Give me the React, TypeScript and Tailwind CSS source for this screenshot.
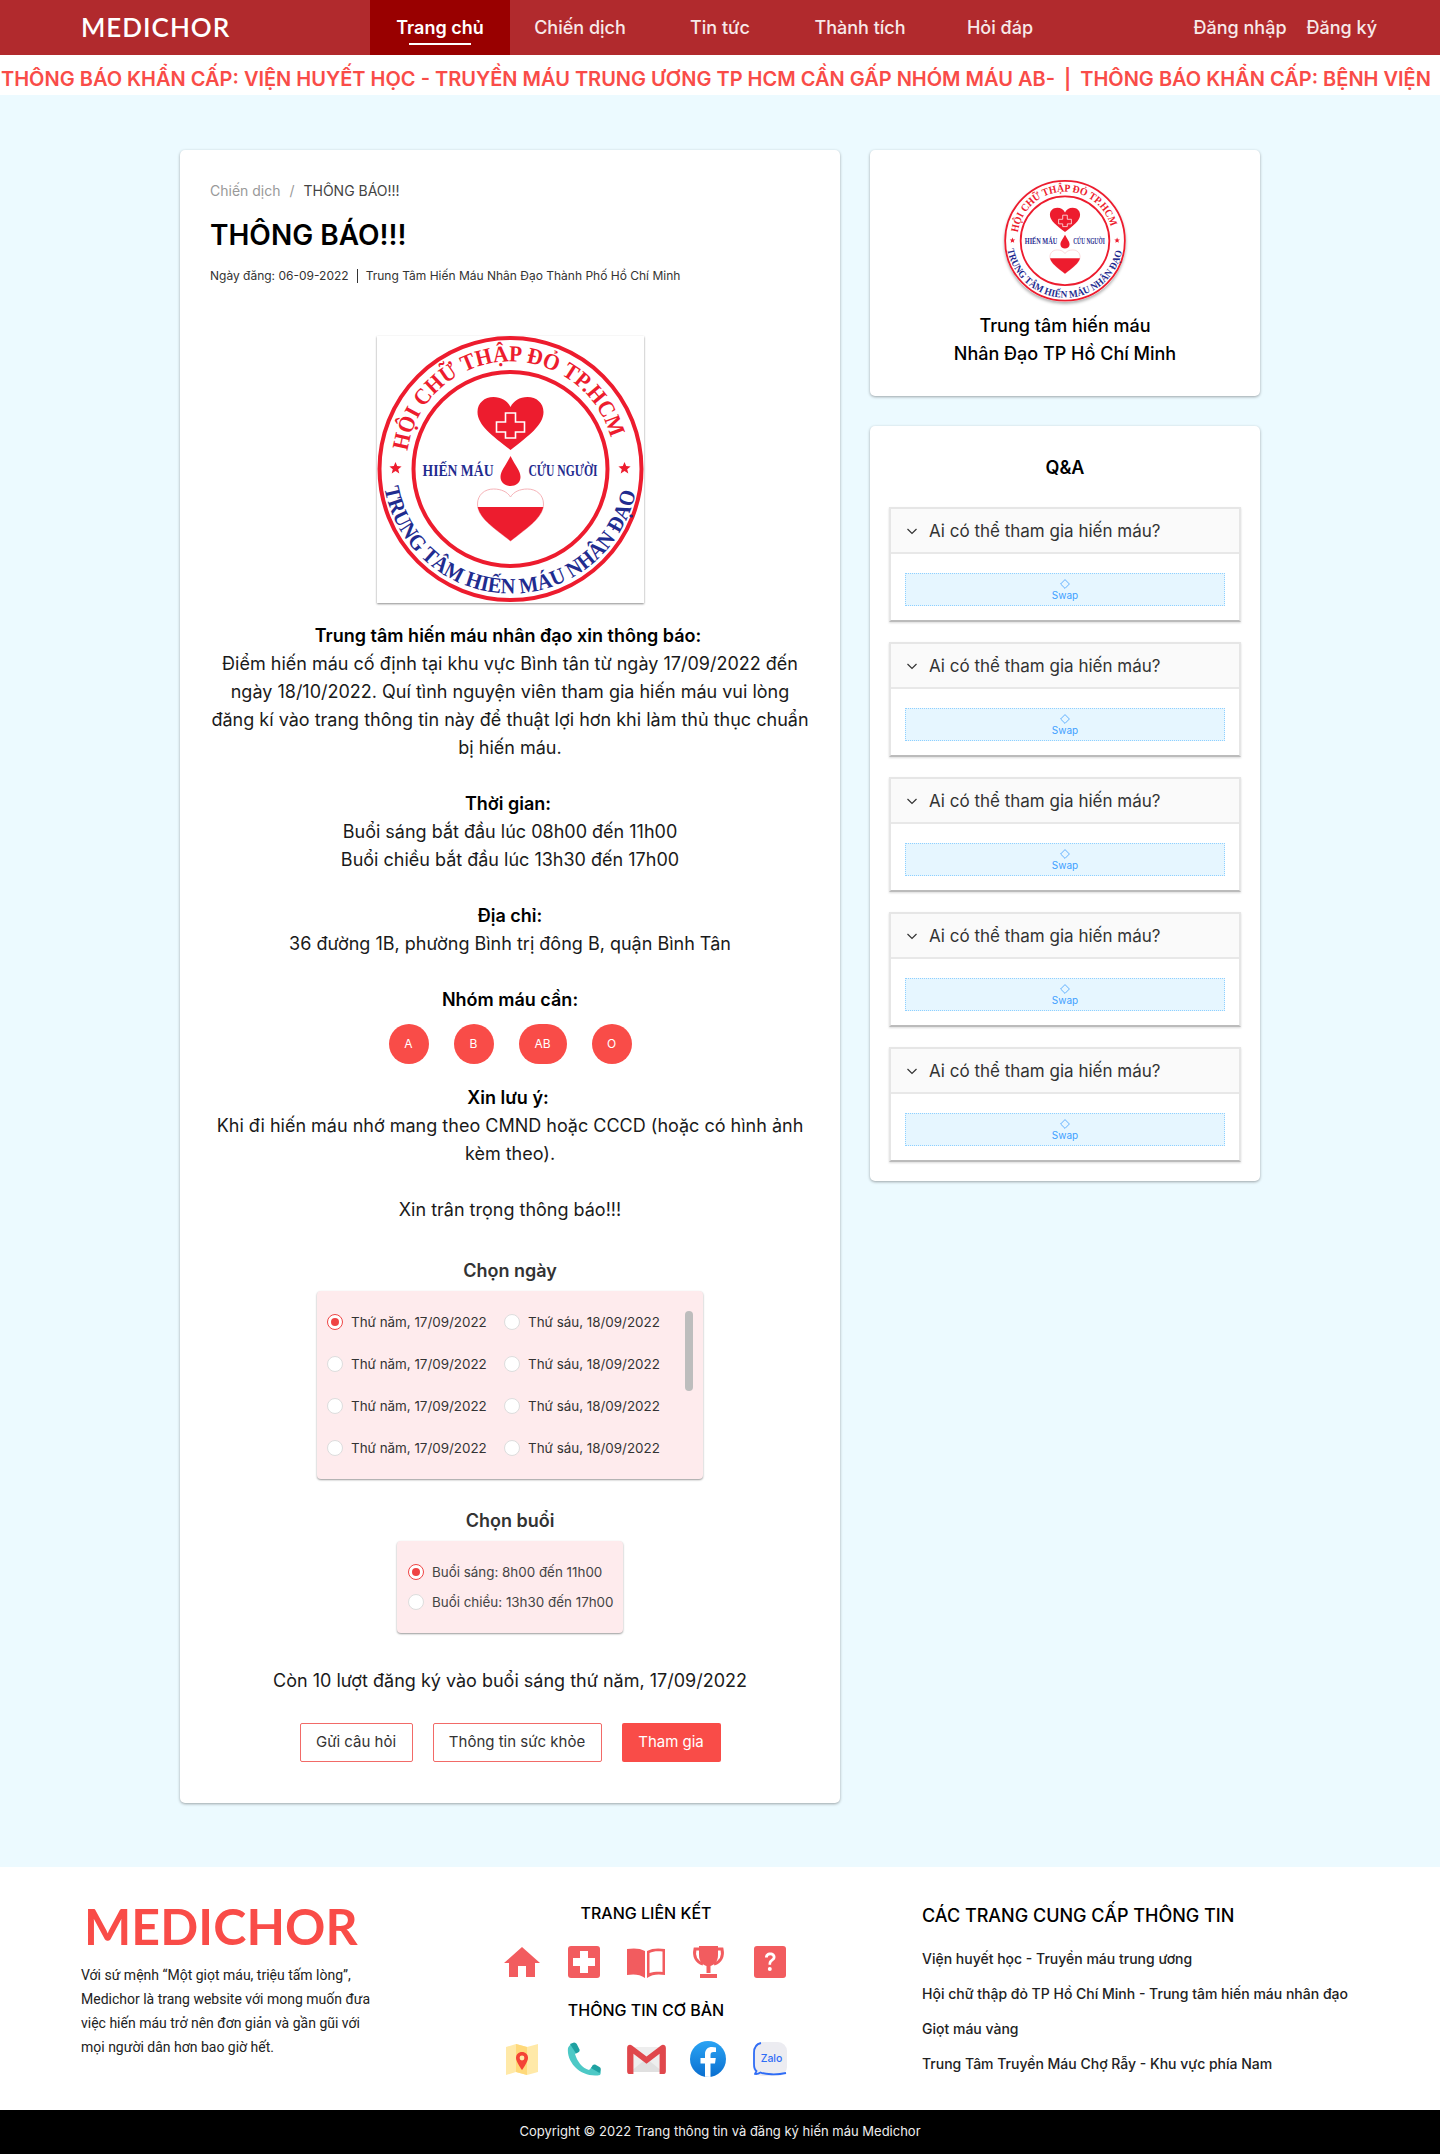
import React from 'react';

const NAV = ['Trang chủ', 'Chiến dịch', 'Tin tức', 'Thành tích', 'Hỏi đáp'];
const SOURCES = [
  'Viện huyết học - Truyền máu trung ương',
  'Hội chữ thập đỏ TP Hồ Chí Minh - Trung tâm hiến máu nhân đạo',
  'Giọt máu vàng',
  'Trung Tâm Truyền Máu Chợ Rẫy - Khu vực phía Nam',
];

const HEART = 'M150 130 C132 116 117 105 117 92 C117 83 124 77 133 77 C141 77 147 81 150 87 C153 81 159 77 167 77 C176 77 183 83 183 92 C183 105 168 116 150 130 Z';
const LOW_HEART = 'M150 221 C132 207 117 197 117 184 C117 175 124 169 133 169 C141 169 147 172 150 177 C153 172 159 169 167 169 C176 169 183 175 183 184 C183 197 168 207 150 221 Z';

// round badge of the blood centre, used big in the article and small in the sidebar
const CenterLogo: React.FC<{ id: string }> = ({ id }) => (
  <svg viewBox="17 16 266 267" className="w-full h-full block">
    <defs>
      <path id={`${id}-top`} d="M47 131 A104 104 0 0 1 253 131" />
      <path id={`${id}-bottom`} d="M24 168 A128 128 0 0 0 276 168" />
      <clipPath id={`${id}-fill`}>
        <rect x="110" y="187" width="80" height="40" />
      </clipPath>
    </defs>
    <circle cx="150" cy="149" r="131" fill="#fff" stroke="#ed1c2e" strokeWidth="4" />
    <circle cx="150" cy="149" r="97" fill="#fff" stroke="#ed1c2e" strokeWidth="4" />
    <text fontFamily="'Liberation Serif', serif" fontWeight="700" fontSize="23" fill="#ed1c2e">
      <textPath href={`#${id}-top`} textLength="284" lengthAdjust="spacingAndGlyphs">HỘI CHỮ THẬP ĐỎ TP.HCM</textPath>
    </text>
    <text fontFamily="'Liberation Serif', serif" fontWeight="700" fontSize="22" fill="#1f2c8f">
      <textPath href={`#${id}-bottom`} textLength="352" lengthAdjust="spacingAndGlyphs">TRUNG TÂM HIẾN MÁU NHÂN ĐẠO</textPath>
    </text>
    <path d="M35 142 l1.700 4.100 4.400 .3 -3.400 2.800 1.100 4.300 -3.800-2.400 -3.800 2.400 1.100-4.300 -3.400-2.800 4.400-.3 Z" fill="#ed1c2e" />
    <path d="M264 142 l1.700 4.100 4.400 .3 -3.400 2.800 1.100 4.300 -3.800-2.400 -3.800 2.400 1.100-4.300 -3.400-2.800 4.400-.3 Z" fill="#ed1c2e" />
    <path d={HEART} fill="#ed1c2e" />
    <path d="M145 94 h10 v9 h9 v10 h-9 v6 h-10 v-6 h-9 v-10 h9 Z" transform="translate(0 -1)" fill="#ed1c2e" stroke="#fff" strokeWidth="1.6" />
    <path d="M150 136 C155 146 160 151 160 157 C160 163 155 166 150 166 C145 166 140 163 140 157 C140 151 145 146 150 136 Z" fill="#ed1c2e" />
    <text x="62" y="156" fontFamily="'Liberation Serif', serif" fontWeight="700" fontSize="16" fill="#1f2c8f" textLength="71" lengthAdjust="spacingAndGlyphs">HIẾN MÁU</text>
    <text x="168" y="156" fontFamily="'Liberation Serif', serif" fontWeight="700" fontSize="16" fill="#1f2c8f" textLength="69" lengthAdjust="spacingAndGlyphs">CỨU NGƯỜI</text>
    <path d={LOW_HEART} fill="#fff" stroke="#f6b3b8" strokeWidth="1" />
    <path d={LOW_HEART} fill="#ed1c2e" clipPath={`url(#${id}-fill)`} />
  </svg>
);

const HomeIcon = () => (
  <svg viewBox="0 0 36 32" className="w-[36px] h-[32px]" fill="#f25c5f">
    <path d="M18 1 L36 17 H31 V31 H22 V20 H14 V31 H5 V17 H0 Z" />
  </svg>
);
const CrossIcon = () => (
  <svg viewBox="0 0 32 32" className="w-[32px] h-[32px]">
    <rect width="32" height="32" rx="3" fill="#f25c5f" />
    <path d="M12 5 h8 v7 h7 v8 h-7 v7 h-8 v-7 h-7 v-8 h7 Z" fill="#fff" />
  </svg>
);
const BookIcon = () => (
  <svg viewBox="0 0 40 32" className="w-[40px] h-[32px]" fill="#f25c5f">
    <path d="M19 5 C14 2 7 2 1 3 V29 C7 28 14 28 19 32 Z" />
    <path d="M21 5 C26 2 33 2 39 3 V29 C33 28 26 28 21 32 Z M23.5 7 V27 C27 26 32 25.500 36.500 26 V5.500 C32 5 27 5 23.500 7 Z" fillRule="evenodd" />
  </svg>
);
const TrophyIcon = () => (
  <svg viewBox="0 0 33 32" className="w-[33px] h-[32px]">
    <path d="M8 3 H3 C1.500 10 4 16 11 18" fill="none" stroke="#f25c5f" strokeWidth="3" />
    <path d="M25 3 H30 C31.500 10 29 16 22 18" fill="none" stroke="#f25c5f" strokeWidth="3" />
    <path d="M7 0 H26 V9 C26 16 22 19 18.500 20 V27 H14.500 V20 C11 19 7 16 7 9 Z" fill="#f25c5f" />
    <rect x="8" y="28" width="17" height="4" fill="#f25c5f" />
  </svg>
);
const QuestionIcon = () => (
  <svg viewBox="0 0 32 32" className="w-[32px] h-[32px]">
    <rect width="32" height="32" rx="3" fill="#f25c5f" />
    <path d="M11 11.500 C11 8.500 13 6.500 16.300 6.500 C19.500 6.500 21.500 8.500 21.500 11 C21.500 13 20.500 14 18.800 15.200 C17.500 16.100 17.100 16.800 17.100 18.800 H14.500 C14.500 16 15 15 16.800 13.600 C18.100 12.600 18.700 12.100 18.700 11.100 C18.700 10 17.800 9.200 16.300 9.200 C14.800 9.200 13.900 10.100 13.800 11.500 Z" fill="#fff" />
    <circle cx="15.800" cy="23" r="2" fill="#fff" />
  </svg>
);
const MapIcon = () => (
  <svg viewBox="0 0 32 32" className="w-[32px] h-[32px]">
    <path d="M0 4 L10 1 L21 4 L32 1 V29 L21 32 L10 29 L0 32 Z" fill="#ffe9a8" />
    <path d="M10 1 L21 4 V32 L10 29 Z" fill="#ffd97a" />
    <path d="M21 9 C17.500 9 15 11.500 15 15 C15 19 21 27 21 27 C21 27 27 19 27 15 C27 11.500 24.500 9 21 9 Z" transform="translate(-5 0)" fill="#f44336" />
    <circle cx="16" cy="15" r="2.400" fill="#ffe9a8" />
  </svg>
);
const PhoneIcon = () => (
  <svg viewBox="0 0 34 34" className="w-[34px] h-[34px]">
    <path d="M1 6 C0 14 4 21 9 26 C14 31 24 35 33 33 C34 31 34 30 33 28 L25 25 L22 28 C15 26 10 19 8 12 L12 9 L8 1 C5 1 2 3 1 6 Z" fill="#4dc9c6" />
    <path d="M3 2 L7 0.500 C8.500 0.500 9.500 1.500 10 2.500 L12.500 7.500 C13 9 12 10 11 10.500 L9 11.500 Z" fill="#1ea1a1" />
    <path d="M24 26 L25.500 23.500 C26.500 22.500 27.500 22.300 29 23 L32.500 25 C34 26 34 27.500 33.500 29 L32.500 31 Z" fill="#1ea1a1" />
  </svg>
);
const MailIcon = () => (
  <svg viewBox="0 0 40 32" className="w-[39px] h-[31px]">
    <path d="M3 3 H37 V29 H3 Z" fill="#eeeeee" />
    <path d="M3 29 L20 15 L37 29 Z" fill="#e0e0e0" />
    <path d="M0 4 C0 1 3 0 5 1.500 L20 13 L35 1.500 C37 0 40 1 40 4 V28 C40 30 39 31 37 31 H33.500 V10 L20 20.500 L6.500 10 V31 H3 C1 31 0 30 0 28 Z" fill="#e0474c" />
  </svg>
);
const FacebookIcon = () => (
  <svg viewBox="0 0 36 36" className="w-[36px] h-[36px]">
    <defs>
      <linearGradient id="fb-grad" x1="0" y1="0" x2="0" y2="1">
        <stop offset="0" stopColor="#2aa4f4" />
        <stop offset="1" stopColor="#0a6fd0" />
      </linearGradient>
    </defs>
    <circle cx="18" cy="18" r="18" fill="url(#fb-grad)" />
    <path d="M20.500 36 V22.500 H25 L25.800 17 H20.500 V14 C20.500 12.300 21.300 11 23.500 11 H26 V6.500 C25 6.300 23.500 6.100 22 6.100 C17.500 6.100 15 8.800 15 13.300 V17 H10.500 V22.500 H15 V35.700 Z" fill="#fff" />
  </svg>
);
const ZaloIcon = () => (
  <svg viewBox="0 0 34 34" className="w-[34px] h-[34px]">
    <rect width="34" height="34" rx="9" fill="#ececf1" />
    <path d="M8 1 C3 2 1 6 1 11 V22 C1 25 2 28 3.500 29 C3 30.500 2 31.500 2 32 C4 32.500 6 31.500 7.500 30.500 C12 32.500 24 33 33 31" fill="none" stroke="#2f6df6" strokeWidth="1.800" />
    <text x="18.500" y="20" textAnchor="middle" fontFamily="Inter, sans-serif" fontSize="10.500" fontWeight="500" fill="#2f6df6">Zalo</text>
  </svg>
);

const Radio: React.FC<{ on?: boolean }> = ({ on }) =>
  on ? (
    <span className="w-4 h-4 rounded-full border border-[#ef4444] bg-white flex items-center justify-center shrink-0">
      <span className="w-2 h-2 rounded-full bg-[#ef4444]" />
    </span>
  ) : (
    <span className="w-4 h-4 rounded-full border border-[#dddddd] bg-white shrink-0" />
  );

const QaItem = () => (
  <div className="border-2 border-[#e6e6e6] border-b-[#bbbbbb] shadow-[0_1px_2px_rgba(0,0,0,0.15)]">
    <div className="h-[45px] bg-[#fafafa] border-b-2 border-[#e8e8e8] flex items-center pl-[15px]">
      <svg viewBox="0 0 12 12" className="w-[12px] h-[12px] text-[#333]" fill="none" stroke="currentColor" strokeWidth="1.200">
        <path d="M1.500 4 L6 8.500 L10.500 4" />
      </svg>
      <span className="ml-[11px] text-[17px] leading-6 text-[#333]">Ai có thể tham gia hiến máu?</span>
    </div>
    <div className="bg-white px-[14px] pt-[19px] pb-[14px]">
      <div className="h-[33px] bg-[#e6f6ff] border border-dotted border-[#8fd0ff] flex flex-col items-center justify-center text-[#40a0ff]">
        <svg viewBox="0 0 10 10" className="w-[10px] h-[10px] mt-[1px]" fill="none" stroke="currentColor" strokeWidth="0.800">
          <path d="M5 .6 L9.400 5 L5 9.400 L.6 5 Z" />
        </svg>
        <span className="text-[10px] leading-[12px]">Swap</span>
      </div>
    </div>
  </div>
);

export default function App() {
  return (
    <div className="w-[1440px] bg-[#ecfaff] font-['Inter',sans-serif] text-[#1a1a1a]">
      <header className="h-[55px] bg-[#b12a2d] text-white flex items-center">
        <div className="w-[370px] pl-[81px] font-['Lato',sans-serif] font-semibold text-[26px] tracking-[1px]">MEDICHOR</div>
        <nav className="flex h-full">
          {NAV.map((item, i) => (
            <a key={item} className={`relative w-[140px] flex items-center justify-center text-[18px] ${i === 0 ? 'bg-[#990000] font-semibold' : 'font-medium text-[#f7e9e9]'}`}>
              {item}
              {i === 0 && <span className="absolute left-[39px] top-[43px] w-[62px] h-[2px] bg-white" />}
            </a>
          ))}
        </nav>
        <div className="ml-auto pr-[63px] flex gap-[20px] text-[18px] font-medium text-[#f7e9e9]">
          <a>Đăng nhập</a>
          <a>Đăng ký</a>
        </div>
      </header>

      <div className="h-[40px] bg-white overflow-hidden whitespace-nowrap flex items-center pl-[1px] pt-[7px] text-[20px] font-semibold text-[#f94c48]">
        <span>THÔNG BÁO KHẨN CẤP: VIỆN HUYẾT HỌC - TRUYỀN MÁU TRUNG ƯƠNG TP HCM CẦN GẤP NHÓM MÁU AB-</span>
        <span className="mx-[9px]">|</span>
        <span>THÔNG BÁO KHẨN CẤP: BỆNH VIỆN</span>
      </div>

      <main className="w-[1080px] mx-auto pt-[55px] pb-[64px] flex items-start gap-[30px]">
        <article className="w-[660px] bg-white rounded-[5px] shadow-[0_1px_3px_rgba(0,0,0,0.35)] px-[30px] pt-[31px] pb-[41px]">
          <div className="text-[14px] leading-5 text-[#999]">
            Chiến dịch <span className="mx-[5px]">/</span> <span className="text-[#444]">THÔNG BÁO!!!</span>
          </div>
          <h1 className="mt-[15px] text-[28px] leading-[38px] font-semibold text-black">THÔNG BÁO!!!</h1>
          <div className="mt-[14px] text-[12px] leading-4 text-[#333] flex items-center">
            <span>Ngày đăng: 06-09-2022</span>
            <span className="mx-[8px] w-px h-[14px] bg-[#333]" />
            <span>Trung Tâm Hiến Máu Nhân Đạo Thành Phố Hồ Chí Minh</span>
          </div>

          <div className="mt-[52px] mx-auto w-[267px] h-[267px] bg-white shadow-[0_1px_2px_rgba(0,0,0,0.45)]">
            <CenterLogo id="big" />
          </div>

          <div className="mt-[19px] text-center text-[18px] leading-[28px]">
            <p className="pr-[4px] font-semibold text-black">Trung tâm hiến máu nhân đạo xin thông báo:</p>
            <p>Điểm hiến máu cố định tại khu vực Bình tân từ ngày 17/09/2022 đến ngày 18/10/2022. Quí tình nguyện viên tham gia hiến máu vui lòng đăng kí vào trang thông tin này để thuật lợi hơn khi làm thủ thục chuẩn bị hiến máu.</p>
            <p className="mt-[28px] pr-[4px] font-semibold text-black">Thời gian:</p>
            <p>Buổi sáng bắt đầu lúc 08h00 đến 11h00</p>
            <p>Buổi chiều bắt đầu lúc 13h30 đến 17h00</p>
            <p className="mt-[28px] font-semibold text-black">Địa chỉ:</p>
            <p>36 đường 1B, phường Bình trị đông B, quận Bình Tân</p>
            <p className="mt-[28px] font-semibold text-black">Nhóm máu cần:</p>
          </div>
          <div className="mt-[10px] flex justify-center gap-[25px]">
            {['A', 'B', 'AB', 'O'].map((g) => (
              <span key={g} className={`${g === 'AB' ? 'w-[48px]' : 'w-[40px]'} h-[40px] rounded-full bg-[#f94c48] text-white text-[12px] flex items-center justify-center`}>{g}</span>
            ))}
          </div>
          <div className="mt-[20px] text-center text-[18px] leading-[28px]">
            <p className="pr-[4px] font-semibold text-black">Xin lưu ý:</p>
            <p>Khi đi hiến máu nhớ mang theo CMND hoặc CCCD (hoặc có hình ảnh kèm theo).</p>
            <p className="mt-[28px]">Xin trân trọng thông báo!!!</p>
          </div>

          <p className="mt-[33px] text-center text-[18px] leading-[28px] font-semibold text-[#333]">Chọn ngày</p>
          <div className="relative mt-[6px] mx-auto w-[386px] h-[188px] bg-[#feebed] rounded-[4px] shadow-[0_1px_2px_rgba(0,0,0,0.4)] pt-[10px] pl-[10px]">
            {[0, 1, 2, 3].map((r) => (
              <div key={r} className="h-[42px] flex items-center text-[13.4px] text-[#333]">
                <div className="w-[177px] flex items-center gap-[8px]"><Radio on={r === 0} /><span>Thứ năm, 17/09/2022</span></div>
                <div className="flex items-center gap-[8px]"><Radio /><span>Thứ sáu, 18/09/2022</span></div>
              </div>
            ))}
            <span className="absolute left-[368px] top-[20px] w-[8px] h-[80px] rounded-full bg-[#bdbdbd]" />
          </div>

          <p className="mt-[28px] text-center text-[18px] leading-[28px] font-semibold text-[#333]">Chọn buổi</p>
          <div className="mt-[6px] mx-auto w-[226px] h-[92px] bg-[#feebed] rounded-[4px] shadow-[0_1px_2px_rgba(0,0,0,0.4)] pt-[16px] pl-[11px] text-[13.4px] text-[#444]">
            <div className="h-[30px] flex items-center gap-[8px]"><Radio on /><span>Buổi sáng: 8h00 đến 11h00</span></div>
            <div className="h-[30px] flex items-center gap-[8px]"><Radio /><span>Buổi chiều: 13h30 đến 17h00</span></div>
          </div>

          <p className="mt-[34px] text-center text-[18px] leading-[28px]">Còn 10 lượt đăng ký vào buổi sáng thứ năm, 17/09/2022</p>

          <div className="mt-[28px] flex justify-center gap-[20px] text-[15px]">
            <button className="w-[113px] h-[39px] border border-[#f26a67] text-[#333] rounded-[2px]">Gửi câu hỏi</button>
            <button className="w-[169px] h-[39px] border border-[#f26a67] text-[#333] rounded-[2px]">Thông tin sức khỏe</button>
            <button className="w-[99px] h-[39px] bg-[#f94c48] text-white rounded-[2px]">Tham gia</button>
          </div>
        </article>

        <aside className="w-[390px] flex flex-col gap-[30px]">
          <section className="h-[246px] bg-white rounded-[5px] shadow-[0_1px_3px_rgba(0,0,0,0.35)] pt-[30px] flex flex-col items-center">
            <div className="w-[122px] h-[122px] rounded-full shadow-[0_2px_3px_rgba(0,0,0,0.3)]">
              <CenterLogo id="small" />
            </div>
            <p className="mt-[10px] text-center text-[18px] leading-[28px] font-medium text-black">Trung tâm hiến máu<br />Nhân Đạo TP Hồ Chí Minh</p>
          </section>
          <section className="bg-white rounded-[5px] shadow-[0_1px_3px_rgba(0,0,0,0.35)] px-[19px] pt-[28px] pb-[19px]">
            <h2 className="text-center text-[18px] leading-7 font-semibold text-black">Q&amp;A</h2>
            <div className="mt-[25px] flex flex-col gap-[20px]">
              {[0, 1, 2, 3, 4].map((i) => <QaItem key={i} />)}
            </div>
          </section>
        </aside>
      </main>

      <footer className="h-[243px] bg-white flex text-black">
        <div className="w-[496px] pl-[81px] pt-[29px]">
          <div className="pl-[3px] font-['Lato',sans-serif] font-bold text-[50px] leading-[60px] tracking-[0.1px] text-[#f94c48]">MEDICHOR</div>
          <p className="mt-[7px] w-[300px] font-['Roboto',sans-serif] text-[14px] leading-[24px] text-[#222]">
            Với sứ mệnh “Một giọt máu, triệu tấm lòng”, Medichor là trang website với mong muốn đưa việc hiến máu trở nên đơn giản và gần gũi với mọi người dân hơn bao giờ hết.
          </p>
        </div>
        <div className="w-[300px] pt-[35px] flex flex-col items-center">
          <h3 className="text-[16px] leading-[22px] font-medium">TRANG LIÊN KẾT</h3>
          <div className="mt-[20px] h-[36px] flex items-center justify-center">
            {[<HomeIcon />, <CrossIcon />, <BookIcon />, <TrophyIcon />, <QuestionIcon />].map((ic, i) => (
              <span key={i} className="w-[62px] flex justify-center">{ic}</span>
            ))}
          </div>
          <h3 className="mt-[19px] text-[16px] leading-[22px] font-medium">THÔNG TIN CƠ BẢN</h3>
          <div className="mt-[20px] h-[36px] flex items-center justify-center">
            {[<MapIcon />, <PhoneIcon />, <MailIcon />, <FacebookIcon />, <ZaloIcon />].map((ic, i) => (
              <span key={i} className="w-[62px] flex justify-center">{ic}</span>
            ))}
          </div>
        </div>
        <div className="ml-[126px] pt-[37px]">
          <h3 className="text-[18px] leading-[24px] font-medium">CÁC TRANG CUNG CẤP THÔNG TIN</h3>
          <ul className="mt-[21px] flex flex-col gap-[15px] text-[14px] leading-[20px] font-medium text-[#222]">
            {SOURCES.map((s) => <li key={s}>{s}</li>)}
          </ul>
        </div>
      </footer>

      <div className="h-[44px] bg-black text-[#eeeeee] text-[13px] flex items-center justify-center">
        Copyright © 2022 Trang thông tin và đăng ký hiến máu Medichor
      </div>
    </div>
  );
}
